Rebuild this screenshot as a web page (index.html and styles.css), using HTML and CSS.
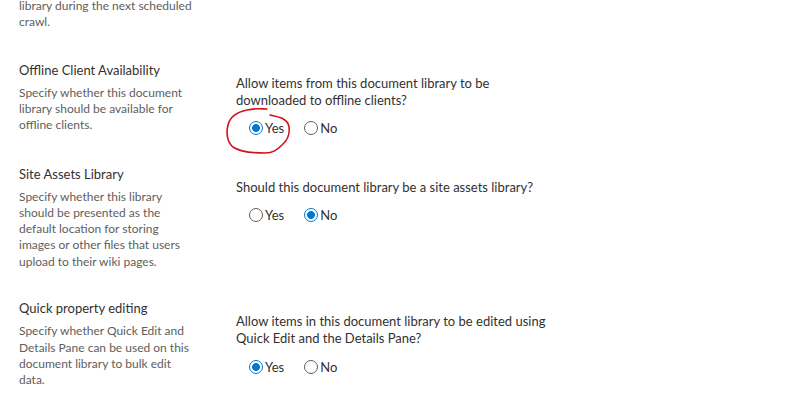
FILE: index.html
```html
<!DOCTYPE html>
<html lang="en">
<head>
    <meta charset="UTF-8">
    <title>Library Settings</title>
    <link rel="stylesheet" href="styles.css">
</head>
<body>
    <main class="settings">
        <section class="setting setting-tail">
            <div class="setting-info">
                <p class="setting-desc">library during the next scheduled crawl.</p>
            </div>
        </section>

        <section class="setting">
            <div class="setting-info">
                <h3 class="setting-title">Offline Client Availability</h3>
                <p class="setting-desc">Specify whether this document library should be available for offline clients.</p>
            </div>
            <div class="setting-field">
                <p class="setting-question">Allow items from this document library to be downloaded to offline clients?</p>
                <div class="choice-group">
                    <label class="choice"><input type="radio" name="offline" checked>Yes</label>
                    <label class="choice"><input type="radio" name="offline">No</label>
                    <!-- hand-drawn highlight from the screenshot -->
                    <svg class="scribble" width="80" height="60" viewBox="0 0 80 60">
                        <path d="M50 15 C60 17 68 19 69 27 C70 34 67 41 62 45 C57 50 53 53 45 53 C35 53 20 52 13 47 C7 42 6 33 8 25 C10 17 17 12 27 10 C35 8 42 9 47 9"/>
                    </svg>
                </div>
            </div>
        </section>

        <section class="setting">
            <div class="setting-info">
                <h3 class="setting-title">Site Assets Library</h3>
                <p class="setting-desc">Specify whether this library should be presented as the default location for storing images or other files that users upload to their wiki pages.</p>
            </div>
            <div class="setting-field">
                <p class="setting-question">Should this document library be a site assets library?</p>
                <div class="choice-group">
                    <label class="choice"><input type="radio" name="assets">Yes</label>
                    <label class="choice"><input type="radio" name="assets" checked>No</label>
                </div>
            </div>
        </section>

        <section class="setting">
            <div class="setting-info">
                <h3 class="setting-title">Quick property editing</h3>
                <p class="setting-desc">Specify whether Quick Edit and Details Pane can be used on this document library to bulk edit data.</p>
            </div>
            <div class="setting-field">
                <p class="setting-question">Allow items in this document library to be edited using Quick Edit and the Details Pane?</p>
                <div class="choice-group">
                    <label class="choice"><input type="radio" name="quickedit" checked>Yes</label>
                    <label class="choice"><input type="radio" name="quickedit">No</label>
                </div>
            </div>
        </section>
    </main>
</body>
</html>
```

FILE: styles.css
```css
* {
    margin: 0;
    padding: 0;
    box-sizing: border-box;
}

body {
    font-family: Lato, 'Segoe UI', sans-serif;
    background: #ffffff;
    color: #323130;
    overflow: hidden;
}

.settings {
    margin-top: -2px;
    padding-left: 19px;
}

.setting {
    display: grid;
    grid-template-columns: 217px 322px;
    align-items: start;
    padding-bottom: 28.5px;
}

.setting-tail {
    padding-bottom: 29px;
}

.setting-info {
    width: 176px;
}

.setting-title {
    font-size: 13px;
    font-weight: 400;
    line-height: 20px;
    margin-bottom: 5px;
    color: #323130;
}

.setting-desc {
    font-size: 12px;
    line-height: 16.25px;
    color: #605e5c;
}

.setting-field {
    padding-top: 15px;
}

.setting-question {
    font-size: 13px;
    line-height: 17px;
    color: #323130;
}

.choice-group {
    position: relative;
    display: flex;
    gap: 20px;
    margin-top: 12.5px;
    padding-left: 13px;
    height: 14px;
}

.choice {
    display: flex;
    align-items: center;
    gap: 2px;
    font-size: 13px;
    line-height: 14px;
    color: #323130;
}

.choice input[type="radio"] {
    appearance: none;
    -webkit-appearance: none;
    width: 14px;
    height: 14px;
    border: 1px solid #605e5c;
    border-radius: 50%;
    background: #fff;
}

.choice input[type="radio"]:checked {
    border-color: #0078d4;
    background: radial-gradient(circle, #0078d4 0 3.6px, #fff 4.2px);
}

.scribble {
    position: absolute;
    left: -16px;
    top: -21px;
    fill: none;
    stroke: #d4111a;
    stroke-width: 1.6;
    stroke-linecap: round;
    pointer-events: none;
}
```
